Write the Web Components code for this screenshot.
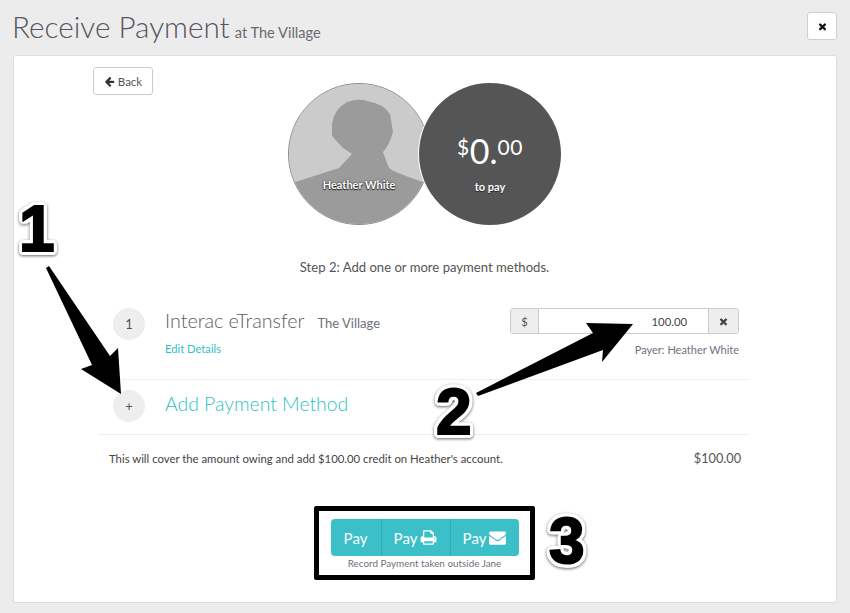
<!DOCTYPE html>
<html><head><meta charset="utf-8"><title>Receive Payment</title>
<style>
html,body{margin:0;padding:0;height:100%;}
body{background:#ececec;font-family:Lato,"Liberation Sans",sans-serif;color:#555;overflow:hidden;}
</style></head>
<body>
<payment-page></payment-page>
<script>
const FA={
times:"M1490 1322q0 40-28 68l-136 136q-28 28-68 28t-68-28l-294-294-294 294q-28 28-68 28t-68-28l-136-136q-28-28-28-68t28-68l294-294-294-294q-28-28-28-68t28-68l136-136q28-28 68-28t68 28l294 294 294-294q28-28 68-28t68 28l136 136q28 28 28 68t-28 68l-294 294 294 294q28 28 28 68z",
left:"M1664 896v128q0 53-32.5 90.5t-84.5 37.5h-704l293 294q38 36 38 90t-38 90l-75 76q-37 37-90 37-52 0-91-37l-651-652q-37-37-37-90 0-52 37-91l651-650q38-38 91-38 52 0 90 38l75 74q38 38 38 91t-38 91l-293 293h704q52 0 84.5 37.5t32.5 90.5z",
mail:"M1792 710v794q0 66-47 113t-113 47h-1472q-66 0-113-47t-47-113v-794q44 49 101 87 362 246 497 345 57 42 92.5 65.5t94.5 48 110 24.5h2q51 0 110-24.5t94.5-48 92.5-65.5q170-123 498-345 57-39 100-87zm0-294q0 79-49 151t-122 123q-376 261-468 325-10 7-42.5 30.5t-54 38-52 32.5-57.5 27-50 9h-2q-23 0-50-9t-57.5-27-52-32.5-54-38-42.5-30.5q-91-64-262-182.5t-205-142.5q-62-42-117-115.5t-55-136.5q0-78 41.5-130t118.5-52h1472q65 0 112.5 47t47.5 113z",
print:"M448 1536h896v-256h-896v256zm0-640h896v-384h-160q-40 0-68-28t-28-68v-160h-640v640zm1152 64q0-26-19-45t-45-19-45 19-19 45 19 45 45 19 45-19 19-45zm128 0v416q0 13-9.5 22.5t-22.5 9.5h-224v160q0 40-28 68t-68 28h-960q-40 0-68-28t-28-68v-160h-224q-13 0-22.5-9.5t-9.5-22.5v-416q0-79 56.5-135.5t135.5-56.5h64v-544q0-40 28-68t68-28h672q40 0 88 20t76 48l152 152q28 28 48 76t20 88v256h64q79 0 135.5 56.5t56.5 135.5z"
};
const icon=(n,s,c)=>`<svg width="${s}" height="${s}" viewBox="0 0 1792 1792" style="display:block;flex:none" fill="${c}"><path d="${FA[n]}"/></svg>`;
function def(name,css,html){
  customElements.define(name,class extends HTMLElement{
    constructor(){super();const r=this.attachShadow({mode:"open"});r.innerHTML=`<style>${css}</style>${typeof html==="function"?html(this):html}`;}
  });
}
def("page-header",`
:host{display:flex;align-items:flex-start;justify-content:space-between;height:44px;padding-top:11px;box-sizing:content-box}
h1{margin:0;font-weight:300;font-size:29.7px;line-height:31px;color:#55555f;white-space:nowrap;margin-left:-1px}
small{font-size:14.6px;color:#6a6a74;margin-left:5px;font-weight:400}
button{all:unset;box-sizing:border-box;width:30px;height:28px;margin-top:1px;background:#fff;border:1px solid #d0d0d0;border-radius:3px;display:flex;align-items:center;justify-content:center}
`,`<h1>Receive Payment<small>at The Village</small></h1><button>${icon("times",11,"#111")}</button>`);

def("back-button",`
:host{display:inline-flex;align-items:center;justify-content:center;gap:3px;box-sizing:border-box;width:60px;height:28px;background:#fff;border:1px solid #ccc;border-radius:3px;font-size:11.5px;color:#555}
`,`${icon("left",11,"#333")}<span>Back</span>`);

def("payer-circles",`
:host{display:flex;justify-content:center;height:142px;padding-left:2px}
.c{width:142px;height:142px;border-radius:50%;position:relative;overflow:hidden;box-sizing:border-box;flex:none;color:#fff;text-align:center}
.a{border:1px solid #8e8e8e;background:#cbcbcb}
.a svg{position:absolute;inset:0;display:block}
.b{background:#555;margin-left:-11px;box-shadow:0 0 0 1px #fff;z-index:1}
.name{position:absolute;left:0;right:0;top:94px;font-size:11px;font-weight:700;text-shadow:0 0 2px #222,0 1px 1px #222}
.amt{position:absolute;left:0;right:0;top:48px;font-weight:400;line-height:40px;font-size:34px;white-space:nowrap}
.amt sup{font-size:21px;line-height:0;vertical-align:9px;letter-spacing:.5px}
.pay{position:absolute;left:0;right:0;top:97px;font-size:11px;font-weight:700;text-shadow:0 1px 1px #222}
`,`<div class="c a"><svg width="140" height="140" viewBox="0 0 140 140"><rect width="140" height="140" fill="#cbcbcb"/><path d="M0 100 L50 84 L63 70 L54 64 L43 52 L43 40 Q45 25 58 18 Q70 14 78 17 Q95 20 101 30 L104 48 Q100 62 94 68 L100 84 Q104 88 134 98 L140 100 V140 H0 Z" fill="#9b9b9b"/></svg><div class="name">Heather White</div></div>
<div class="c b"><div class="amt"><sup>$</sup>0.<sup>00</sup></div><div class="pay">to pay</div></div>`);

def("step-text",`:host{display:block;text-align:center;font-size:13.1px;color:#555;line-height:16px;padding-left:2px}`,`<slot></slot>`);

def("method-row",`
:host{display:block;border-bottom:1px solid #eee;height:71px;box-sizing:content-box;padding:0 10px 0 15px}
.row{display:flex;align-items:flex-start}
.num{width:32px;height:32px;border-radius:50%;background:#eee;color:#555;font-size:13px;display:flex;align-items:center;justify-content:center;flex:none}
.main{margin-left:20px;flex:1;padding-top:1px}
.t{font-size:19.7px;color:#5c5c68;font-weight:300;line-height:24px;white-space:nowrap}
.t span{font-size:13px;margin-left:13px;color:#70707a;font-weight:400}
.edit{font-size:11.2px;color:#2fbfc9;margin-top:7px;line-height:14px}
.side{width:229px;flex:none}
.group{display:flex;height:26px;border:1px solid #ccc;border-radius:3px;box-sizing:border-box;overflow:hidden;font-size:11.3px;color:#555}
.addon{width:27px;background:#eee;display:flex;align-items:center;justify-content:center;flex:none}
.addon.l{border-right:1px solid #ccc}
.addon.r{width:29px;border-left:1px solid #ccc}
.val{flex:1;background:#fff;text-align:right;padding-right:21px;line-height:25px;color:#444}
.payer{text-align:right;font-size:11px;color:#72727e;margin-top:9px;line-height:14px}
`,`<div class="row"><div class="num">1</div><div class="main"><div class="t">Interac eTransfer<span>The Village</span></div><div class="edit">Edit Details</div></div>
<div class="side"><div class="group"><div class="addon l">$</div><div class="val">100.00</div><div class="addon r">${icon("times",11,"#444")}</div></div><div class="payer">Payer: Heather White</div></div></div>`);

def("add-row",`
:host{display:flex;align-items:center;height:52px;padding:0 15px 2px;border-bottom:1px solid #eee;box-sizing:content-box}
.num{width:32px;height:32px;border-radius:50%;background:#eee;color:#555;font-size:13px;display:flex;align-items:center;justify-content:center;flex:none}
.t{margin:0 0 6px 20px;font-size:19.4px;font-weight:300;color:#2fbfc9;white-space:nowrap}
`,`<div class="num">+</div><div class="t">Add Payment Method</div>`);

def("summary-row",`
:host{display:flex;justify-content:space-between;align-items:center;padding:0 8px 0 11px;height:16px;font-size:11.35px;color:#444}
.v{font-size:12.7px;color:#555}
`,`<span>This will cover the amount owing and add $100.00 credit on Heather's account.</span><span class="v">$100.00</span>`);

def("pay-actions",`
:host{display:flex;flex-direction:column;align-items:center;padding-left:2px}
.g{display:flex;height:37px;width:188px;background:#3bc0ca;border-radius:4px;overflow:hidden;color:#fff;font-size:15px}
.g div{display:flex;align-items:center;justify-content:center;gap:3px;box-sizing:border-box}
.g div+div{border-left:1px solid #33aab4}
.p1{width:50px}.p2{width:69px}.p3{width:69px}
.n{font-size:9.9px;color:#70707a;margin-top:0;line-height:14px}
`,`<div class="g"><div class="p1">Pay</div><div class="p2">Pay${icon("print",17,"#fff")}</div><div class="p3">Pay${icon("mail",17,"#fff")}</div></div><div class="n">Record Payment taken outside Jane</div>`);

def("payment-card",`
:host{display:block;background:#fff;border:1px solid #ddd;border-radius:3px;height:548px;box-sizing:border-box;padding:11px 87px 0 84px}
.back{height:28px;margin-left:-5px}
.circles{margin-top:-12px}
.step{margin-top:34px}
.rows{margin-top:33px}
.sum{margin-top:15px}
.act{margin-top:53px}
`,`<div class="back"><slot name="back"></slot></div><div class="circles"><slot name="circles"></slot></div><div class="step"><slot name="step"></slot></div><div class="rows"><slot name="rows"></slot></div><div class="sum"><slot name="sum"></slot></div><div class="act"><slot name="act"></slot></div>`);

def("big-number",`
:host{position:absolute;display:block;font-family:"Liberation Sans",sans-serif;font-weight:700;font-size:64px;line-height:64px;color:#000;-webkit-text-stroke:2px #000;text-shadow:4px 0 0 #fff,-4px 0 0 #fff,0 4px 0 #fff,0 -4px 0 #fff,3px 3px 0 #fff,-3px 3px 0 #fff,3px -3px 0 #fff,-3px -3px 0 #fff,2px 4px 0 #fff,-2px 4px 0 #fff,2px -4px 0 #fff,-2px -4px 0 #fff,4px 2px 0 #fff,-4px 2px 0 #fff,4px -2px 0 #fff,-4px -2px 0 #fff;filter:drop-shadow(0 1px 1.5px rgba(0,0,0,.6))}
`,`<slot></slot>`);

def("annotation-layer",`
:host{position:absolute;inset:0;display:block;pointer-events:none}
svg{position:absolute;inset:0}
.box{position:absolute;left:314px;top:506px;width:221px;height:74px;box-sizing:border-box;border:5px solid #000;border-radius:2px}
`,`<svg width="850" height="613" viewBox="0 0 850 613"><path d="M46 268 L49 266 L110 356 L118 348 L121 394 L81 369 L92 365 Z" fill="#000"/><path d="M476 393 L593 333 L586 323 L633 324 L602 362 L603 350 L478 396 Z" fill="#000"/></svg><div class="box"></div><slot></slot>`);

def("payment-page",`
:host{display:block;position:relative;width:850px;height:613px;padding:0 13px;box-sizing:border-box}
`,`<page-header></page-header>
<payment-card>
<back-button slot="back"></back-button>
<payer-circles slot="circles"></payer-circles>
<step-text slot="step">Step 2: Add one or more payment methods.</step-text>
<div slot="rows"><method-row></method-row><add-row></add-row></div>
<summary-row slot="sum"></summary-row>
<pay-actions slot="act"></pay-actions>
</payment-card>
<annotation-layer>
<big-number style="left:19px;top:197px">1</big-number>
<big-number style="left:436px;top:380px">2</big-number>
<big-number style="left:549px;top:509px">3</big-number>
</annotation-layer>`);
</script>
</body></html>
